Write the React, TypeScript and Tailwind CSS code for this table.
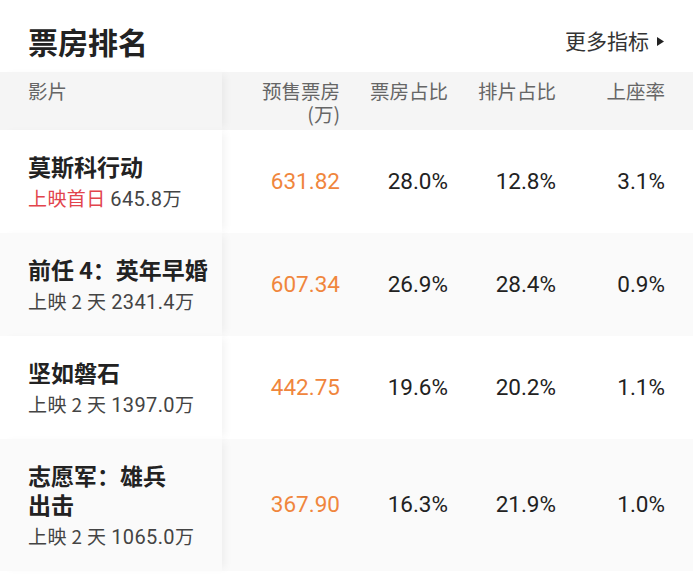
import React from 'react'

interface Movie {
  name: string
  tag: string
  tagHot?: boolean
  total: string
  presale: string
  boxShare: string
  showShare: string
  seatRate: string
}

const movies: Movie[] = [
  { name: '莫斯科行动', tag: '上映首日', tagHot: true, total: '645.8万', presale: '631.82', boxShare: '28.0%', showShare: '12.8%', seatRate: '3.1%' },
  { name: '前任 4：英年早婚', tag: '上映 2 天', total: '2341.4万', presale: '607.34', boxShare: '26.9%', showShare: '28.4%', seatRate: '0.9%' },
  { name: '坚如磐石', tag: '上映 2 天', total: '1397.0万', presale: '442.75', boxShare: '19.6%', showShare: '20.2%', seatRate: '1.1%' },
  { name: '志愿军：雄兵\n出击', tag: '上映 2 天', total: '1065.0万', presale: '367.90', boxShare: '16.3%', showShare: '21.9%', seatRate: '1.0%' },
]

const cols = 'grid grid-cols-[222px_118px_108px_108px_109px] pr-[28px]'
const num = "font-['Roboto','Noto_Sans',sans-serif] text-[22.5px] text-right self-center"

export default function App() {
  return (
    <div className="w-[693px] h-[575px] overflow-hidden bg-white font-['Noto_Sans_CJK_SC','Noto_Sans',sans-serif]">
      {/* title */}
      <div className="h-[72px] flex items-center justify-between pl-[28px] pr-[29px] pt-[10px]">
        <h1 className="text-[30px] font-bold text-[#222]">票房排名</h1>
        <div className="flex items-center gap-[8px] text-[21px] text-[#333]">
          <span>更多指标</span>
          <svg width="7" height="9" viewBox="0 0 7 9">
            <path d="M0 0 L7 4.5 L0 9 Z" fill="#222" />
          </svg>
        </div>
      </div>

      {/* header */}
      <div className={`${cols} h-[58px] bg-[#f5f5f5] text-[19.5px] leading-[23px] text-[#666]`}>
        <div className="pl-[28px] pt-[7px] h-full shadow-[6px_0_8px_-3px_rgba(0,0,0,0.05)]">影片</div>
        <div className="pt-[7px] text-right">
          <div>预售票房</div>
          <div>(万)</div>
        </div>
        <div className="pt-[7px] text-right">票房占比</div>
        <div className="pt-[7px] text-right">排片占比</div>
        <div className="pt-[7px] text-right">上座率</div>
      </div>

      {/* rows */}
      {movies.map((m, i) => (
        <div key={m.name} className={`${cols} items-stretch ${i % 2 === 1 ? 'bg-[#fafafa]' : 'bg-white'}`}>
          <div
            className={`pl-[28px] pr-[12px] pt-[22px] pb-[20px] shadow-[6px_0_8px_-3px_rgba(0,0,0,0.05)] ${i % 2 === 1 ? 'bg-[#fafafa]' : 'bg-white'}`}
          >
            <div className="whitespace-pre-line text-[23px] leading-[29px] font-semibold text-[#222]">{m.name}</div>
            <div className="text-[19px] leading-[28px] mt-[3px] text-[#444] tracking-[0.4px]">
              <span className={m.tagHot ? 'text-[#e2444c]' : ''}>{m.tag}</span>{' '}
              <span className="font-['Roboto','Noto_Sans_CJK_SC',sans-serif] text-[20px]">{m.total.slice(0, -1)}</span>
              {m.total.slice(-1)}
            </div>
          </div>
          <div className={`${num} text-[#f0863d]`}>{m.presale}</div>
          <div className={`${num} text-[#222]`}>{m.boxShare}</div>
          <div className={`${num} text-[#222]`}>{m.showShare}</div>
          <div className={`${num} text-[#222]`}>{m.seatRate}</div>
        </div>
      ))}
    </div>
  )
}
